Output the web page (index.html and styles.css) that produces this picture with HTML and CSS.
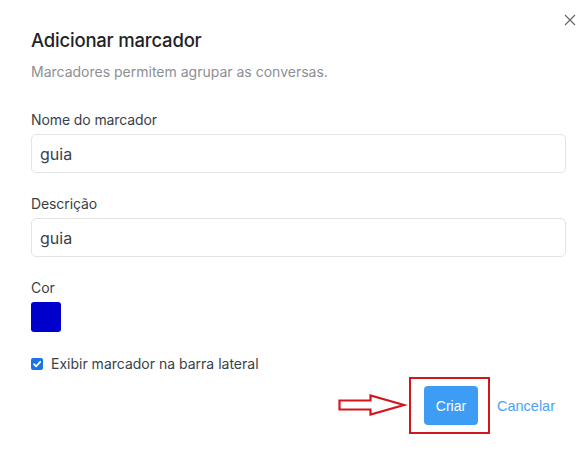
FILE: index.html
```html
<!DOCTYPE html>
<html lang="pt">
<head>
<meta charset="utf-8">
<link rel="stylesheet" href="styles.css">
</head>
<body>
<div class="modal">
  <button class="close" aria-label="Fechar">
    <svg width="12" height="12" viewBox="0 0 12 12"><path d="M1 1L11 11M11 1L1 11" stroke="#6b6b6b" stroke-width="1.3" fill="none"/></svg>
  </button>
  <h1 class="title">Adicionar marcador</h1>
  <p class="subtitle">Marcadores permitem agrupar as conversas.</p>

  <div class="field first">
    <label class="label">Nome do marcador</label>
    <div class="input">guia</div>
  </div>
  <div class="field">
    <label class="label">Descrição</label>
    <div class="input">guia</div>
  </div>
  <div class="field">
    <label class="label">Cor</label>
    <div class="swatch"></div>
  </div>
  <div class="check-row">
    <span class="checkbox">
      <svg width="10" height="10" viewBox="0 0 10 10"><path d="M2 5.2L4.1 7.3L8.2 2.8" stroke="#fff" stroke-width="1.8" fill="none" stroke-linecap="round" stroke-linejoin="round"/></svg>
    </span>
    <span class="check-text">Exibir marcador na barra lateral</span>
  </div>
  <div class="footer">
    <div class="annot">
      <svg class="arrow" width="70" height="22" viewBox="0 0 70 22"><path d="M1.5 6.5H32.5V1.5L66 11L32.5 20.5V15.5H1.5Z" fill="#fff" stroke="#d3161d" stroke-width="2.2" stroke-linejoin="miter"/></svg>
      <div class="highlight"></div>
      <button class="btn-primary">Criar</button>
    </div>
    <a class="btn-link">Cancelar</a>
  </div>
</div>
</body>
</html>
```
FILE: styles.css
```css
* { box-sizing: border-box; }
html, body { margin: 0; padding: 0; background: #fff; }
body { font-family: "Inter", "Noto Sans", sans-serif; color: #2b2f36; }
.modal {
  position: relative;
  width: 588px;
  height: 453px;
  padding: 28px 22px 0 31px;
}
.close {
  position: absolute;
  top: 14px;
  right: 12px;
  background: none;
  border: 0;
  padding: 0;
  width: 12px;
  height: 12px;
}
.close svg { display: block; }
.title {
  margin: 0;
  font-size: 18.5px;
  font-weight: 500;
  line-height: 24px;
  color: #1f2329;
  letter-spacing: -0.2px;
}
.subtitle {
  margin: 11px 0 0;
  font-size: 14px;
  line-height: 18px;
  color: #8c8f94;
}
.field { margin-top: 22px; display: flex; flex-direction: column; }
.field.first { margin-top: 30px; }
.label {
  font-size: 14px;
  line-height: 18px;
  color: #3a3f47;
  margin-bottom: 5px;
  letter-spacing: -0.1px;
}
.input {
  height: 39px;
  border: 1px solid #e3e3e3;
  border-radius: 5px;
  padding: 0 8px;
  display: flex;
  align-items: center;
  font-size: 16px;
  color: #3a3f47;
}
.swatch {
  width: 30px;
  height: 30px;
  border-radius: 3px;
  background: #0000cc;
}
.check-row {
  margin-top: 23px;
  display: flex;
  align-items: center;
  gap: 8px;
}
.checkbox {
  width: 12px;
  height: 12px;
  border-radius: 2px;
  background: #1a73e8;
  display: flex;
  align-items: center;
  justify-content: center;
}
.checkbox svg { display: block; }
.check-text {
  font-size: 14px;
  line-height: 18px;
  color: #3a3f47;
}
.footer {
  margin-top: 13px;
  display: flex;
  justify-content: flex-end;
  align-items: center;
  gap: 19px;
  padding-right: 11px;
}
.annot { position: relative; }
.arrow {
  position: absolute;
  left: -86px;
  top: 8px;
}
.highlight {
  position: absolute;
  left: -15px;
  top: -9px;
  width: 81px;
  height: 57px;
  border: 2px solid #d3161d;
}
.btn-primary {
  display: block;
  width: 54px;
  height: 39px;
  border: 0;
  border-radius: 4px;
  background: #3d9cf4;
  color: #fff;
  font-family: "Liberation Sans", Arial, sans-serif;
  font-size: 14px;
  padding: 0;
}
.btn-link {
  font-family: "Liberation Sans", Arial, sans-serif;
  font-size: 14.5px;
  color: #4ba3f2;
}
```
